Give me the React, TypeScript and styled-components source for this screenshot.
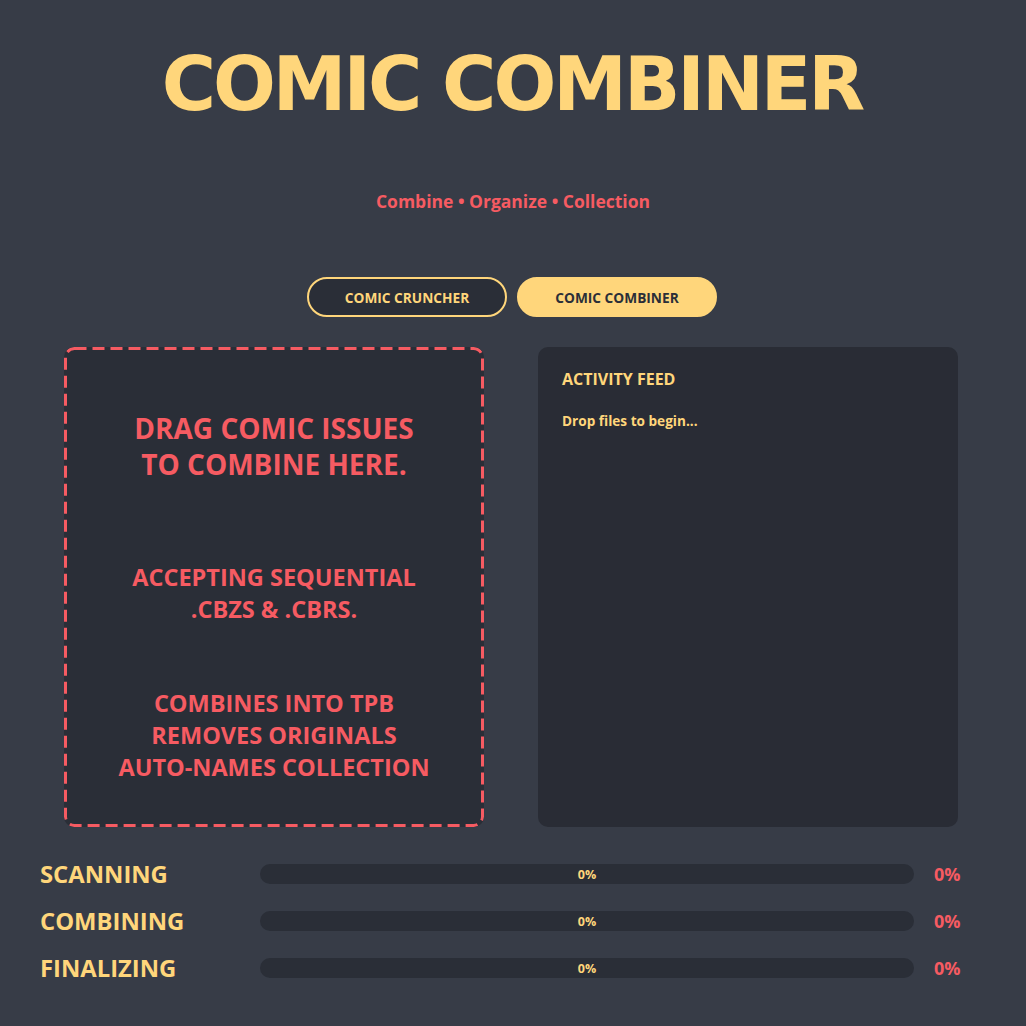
import React from "react";
import styled, { createGlobalStyle } from "styled-components";

const Global = createGlobalStyle`
  html, body { margin: 0; padding: 0; background: #373c47; }
  body { font-family: "Open Sans", "Noto Sans", sans-serif; }
  * { box-sizing: border-box; }
`;

const YELLOW = "#ffd67b";
const CORAL = "#f65b62";
const PANEL = "#2a2e37";

const dashed = encodeURIComponent(
  `<svg xmlns='http://www.w3.org/2000/svg' width='420' height='480'><rect x='1.5' y='1.5' width='417' height='477' rx='9' ry='9' fill='none' stroke='${CORAL}' stroke-width='3' stroke-dasharray='12 6'/></svg>`
);

const Page = styled.div`
  width: 1026px;
  height: 1026px;
  background: #373c47;
  display: flex;
  flex-direction: column;
  align-items: center;
  padding-top: 40px;
`;

const Title = styled.h1`
  margin: 0 0 0 -2px;
  font-family: "DejaVu Sans", Verdana, sans-serif;
  font-weight: bold;
  font-size: 74px;
  line-height: 88px;
  color: ${YELLOW};
  letter-spacing: -3px;
`;

const Subtitle = styled.div`
  margin-top: 61px;
  font-size: 17.5px;
  font-weight: 700;
  line-height: 24px;
  color: ${CORAL};
`;

const Tabs = styled.div`
  margin-top: 64px;
  margin-right: 2px;
  display: flex;
  gap: 10px;
`;

const Tab = styled.button<{ $active?: boolean }>`
  width: 200px;
  height: 40px;
  border-radius: 20px;
  border: 2px solid ${YELLOW};
  background: ${(p) => (p.$active ? YELLOW : PANEL)};
  color: ${(p) => (p.$active ? "#2b2f38" : YELLOW)};
  font-family: "Open Sans", sans-serif;
  font-weight: 700;
  font-size: 13.7px;
  padding: 0;
`;

const Panels = styled.div`
  margin-top: 30px;
  margin-right: 4px;
  display: grid;
  grid-template-columns: 420px 420px;
  gap: 54px;
  height: 480px;
`;

const DropZone = styled.div`
  border-radius: 10px;
  background-color: ${PANEL};
  background-image: url("data:image/svg+xml,${dashed}");
  background-repeat: no-repeat;
  display: flex;
  flex-direction: column;
  align-items: center;
  padding-top: 63px;
  text-align: center;
  color: ${CORAL};
  font-weight: 700;
`;

const DropHead = styled.div`
  font-size: 28px;
  line-height: 36px;
`;

const DropLines = styled.div<{ $gap: number }>`
  margin-top: ${(p) => p.$gap}px;
  font-size: 23.5px;
  line-height: 32px;
`;

const Feed = styled.div`
  background: #292c35;
  border-radius: 10px;
  padding: 22px 24px;
  color: ${YELLOW};
  font-weight: 700;
`;

const FeedTitle = styled.div`
  font-size: 16px;
  line-height: 20px;
`;

const FeedLine = styled.div`
  margin-top: 23px;
  font-size: 13.6px;
  line-height: 18px;
`;

const Progress = styled.div`
  margin-top: 37px;
  width: 1026px;
  padding: 0 40px;
  display: flex;
  flex-direction: column;
  gap: 27px;
`;

const Row = styled.div`
  display: grid;
  grid-template-columns: 220px 654px 1fr;
  align-items: center;
`;

const Label = styled.div`
  font-size: 23.8px;
  font-weight: 700;
  line-height: 20px;
  color: ${YELLOW};
`;

const Track = styled.div`
  height: 20px;
  border-radius: 10px;
  background: ${PANEL};
  display: flex;
  align-items: center;
  justify-content: center;
  font-size: 12.5px;
  font-weight: 700;
  color: ${YELLOW};
`;

const Pct = styled.div`
  padding-left: 20px;
  font-size: 18px;
  font-weight: 700;
  color: ${CORAL};
  line-height: 20px;
`;

const stages = ["SCANNING", "COMBINING", "FINALIZING"];

export default function App() {
  return (
    <Page>
      <Global />
      <Title>COMIC COMBINER</Title>
      <Subtitle>Combine • Organize • Collection</Subtitle>
      <Tabs>
        <Tab>COMIC CRUNCHER</Tab>
        <Tab $active>COMIC COMBINER</Tab>
      </Tabs>
      <Panels>
        <DropZone>
          <DropHead>
            DRAG COMIC ISSUES
            <br />
            TO COMBINE HERE.
          </DropHead>
          <DropLines $gap={79}>
            ACCEPTING SEQUENTIAL
            <br />
            .CBZS &amp; .CBRS.
          </DropLines>
          <DropLines $gap={62}>
            COMBINES INTO TPB
            <br />
            REMOVES ORIGINALS
            <br />
            AUTO-NAMES COLLECTION
          </DropLines>
        </DropZone>
        <Feed>
          <FeedTitle>ACTIVITY FEED</FeedTitle>
          <FeedLine>Drop files to begin...</FeedLine>
        </Feed>
      </Panels>
      <Progress>
        {stages.map((s) => (
          <Row key={s}>
            <Label>{s}</Label>
            <Track>0%</Track>
            <Pct>0%</Pct>
          </Row>
        ))}
      </Progress>
    </Page>
  );
}
